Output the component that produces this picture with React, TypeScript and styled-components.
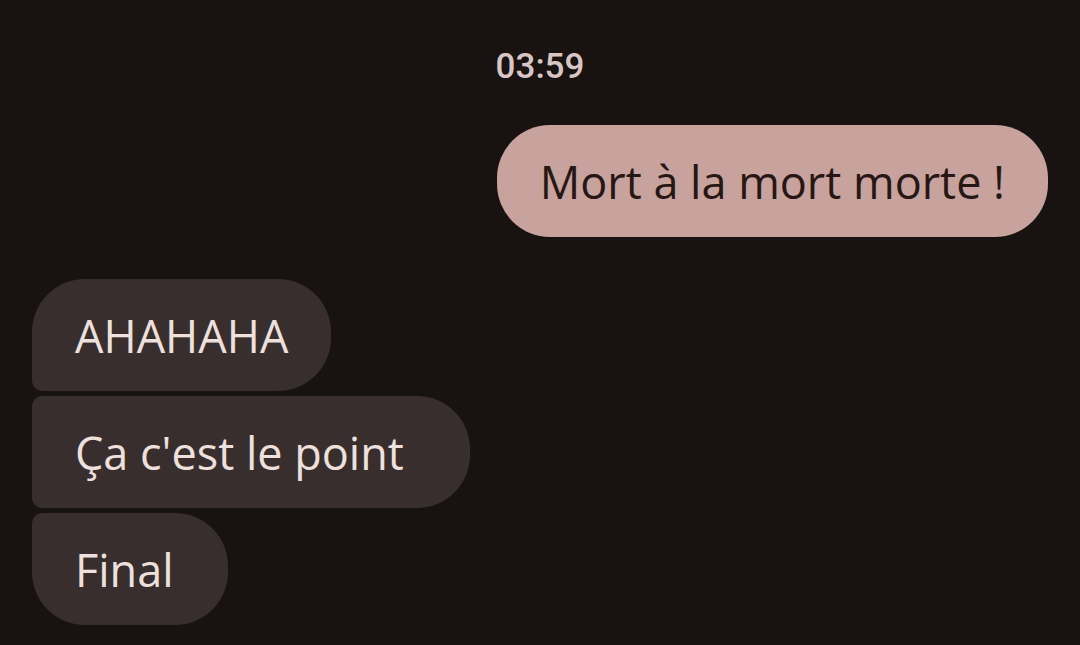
import React from "react";
import styled, { createGlobalStyle } from "styled-components";

const GlobalStyle = createGlobalStyle`
  * { box-sizing: border-box; }
  body {
    margin: 0;
    background: #181210;
    font-family: "Open Sans", sans-serif;
  }
`;

const Conversation = styled.main`
  display: flex;
  flex-direction: column;
  min-height: 100vh;
  padding: 45px 32px 20px;
`;

const Timestamp = styled.time`
  align-self: center;
  margin-bottom: 36px;
  color: #d8c6c4;
  font-family: Roboto, sans-serif;
  font-size: 35px;
  font-weight: 500;
  line-height: 44px;
`;

const Group = styled.section`
  display: flex;
  flex-direction: column;
  gap: 5px;
  & + & { margin-top: 42px; }
`;

type Position = "single" | "first" | "middle" | "last";

const corners: Record<Position, string> = {
  single: "53px",
  first: "53px 53px 53px 10px",
  middle: "10px 53px 53px 10px",
  last: "10px 53px 53px 53px",
};

const Bubble = styled.p<{ $sent?: boolean; $position?: Position }>`
  align-self: ${(p) => (p.$sent ? "flex-end" : "flex-start")};
  margin: 0;
  padding: 25px 43px 23px;
  border-radius: ${(p) => corners[p.$position ?? "single"]};
  background: ${(p) => (p.$sent ? "#c8a29d" : "#382e2d")};
  color: ${(p) => (p.$sent ? "#271714" : "#ede0dd")};
  font-size: 45px;
  line-height: 64px;
  overflow-wrap: anywhere;
`;

export default function App() {
  return (
    <>
      <GlobalStyle />
      <Conversation>
        <Timestamp dateTime="03:59">03:59</Timestamp>
        <Group>
          <Bubble $sent>Mort à la mort morte !</Bubble>
        </Group>
        <Group>
          <Bubble $position="first">AHAHAHA</Bubble>
          <Bubble $position="middle">Ça c'est le point{"\u00a0\u00a0"}</Bubble>
          <Bubble $position="last">Final{"\u00a0"}</Bubble>
        </Group>
      </Conversation>
    </>
  );
}
